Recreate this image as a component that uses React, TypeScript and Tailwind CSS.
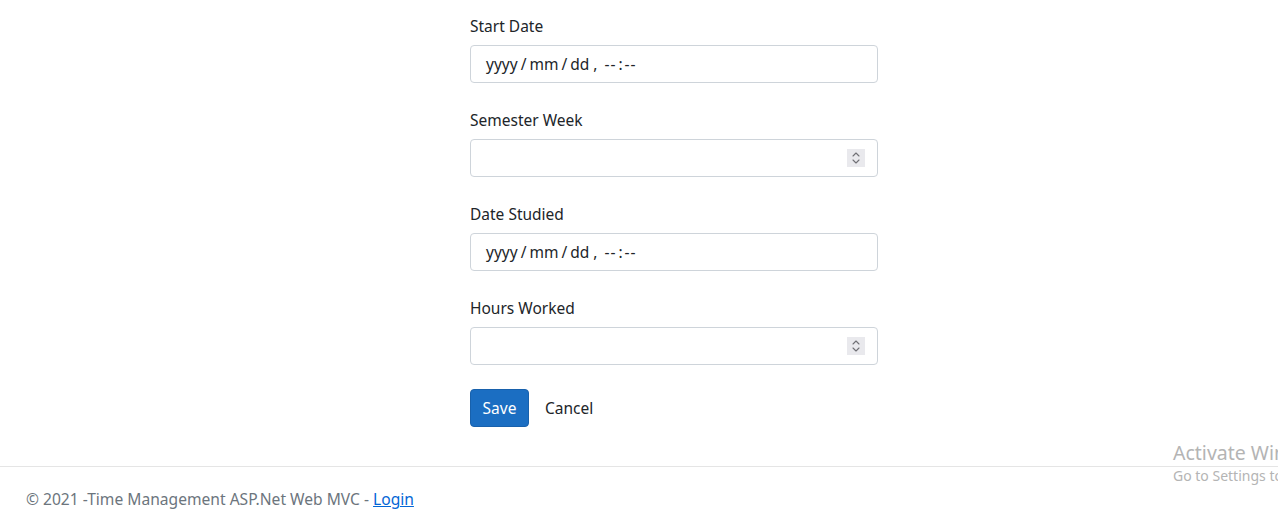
import React from "react";

const font = { fontFamily: '"Segoe UI", "Noto Sans", "Open Sans", sans-serif' };

function DateField() {
  return (
    <div className="h-[38px] w-full rounded-[4px] border border-[#ced4da] bg-white flex items-center pl-[15px] text-[15.5px] text-[#212529] pt-[1px]">
      <span>yyyy</span>
      <span className="mx-[3px]">/</span>
      <span>mm</span>
      <span className="mx-[3px]">/</span>
      <span>dd</span>
      <span className="ml-[4px]">,</span>
      <span className="ml-[7px] tracking-[1px]">--</span>
      <span className="mx-[2px]">:</span>
      <span className="tracking-[1px]">--</span>
    </div>
  );
}

function NumberField() {
  return (
    <div className="h-[38px] w-full rounded-[4px] border border-[#ced4da] bg-white flex items-center justify-end pr-[12px]">
      <div className="w-[18px] h-[18px] bg-[#e9e9ed] flex items-center justify-center">
        <svg width="10" height="16" viewBox="0 0 10 16" fill="none" stroke="#707075" strokeWidth="1.1" strokeLinecap="round" strokeLinejoin="round">
          <path d="M2 6 L5 3 L8 6" />
          <path d="M2 10 L5 13 L8 10" />
        </svg>
      </div>
    </div>
  );
}

function Group({ label, children }: { label: string; children: React.ReactNode }) {
  return (
    <div className="mb-[25px]">
      <div className="h-[24px] leading-[24px] text-[15.5px] text-[#212529] mb-[7px]">{label}</div>
      {children}
    </div>
  );
}

export default function App() {
  return (
    <div className="relative w-[1278px] h-[525px] bg-white overflow-hidden" style={font}>
      <div className="pt-[14px] pl-[470px]">
        <div className="w-[408px]">
          <Group label="Start Date"><DateField /></Group>
          <Group label="Semester Week"><NumberField /></Group>
          <Group label="Date Studied"><DateField /></Group>
          <Group label="Hours Worked"><NumberField /></Group>
        </div>
        <div className="flex items-center -mt-[1px]">
          <button className="h-[38px] w-[59px] rounded-[4px] bg-[#1b6ec2] border border-[#1861ac] text-white text-[15.5px] pt-[2px]">Save</button>
          <span className="ml-[16px] text-[15.5px] text-[#212529] pt-[2px]">Cancel</span>
        </div>
      </div>
      <div className="absolute left-0 right-0 top-[466px] border-t border-[#e5e5e5]">
        <div className="pl-[26px] pt-[20px] text-[15.6px] leading-[24px] text-[#6c757d]">
          © 2021 -Time Management ASP.Net Web MVC - <span className="text-[#0366d6] underline">Login</span>
        </div>
      </div>
      <div className="absolute left-[1173px] top-[440px] whitespace-nowrap text-[#b4b4b4]">
        <div className="text-[19.5px] leading-[26px]">Activate Windows</div>
        <div className="text-[14px] leading-[20px]">Go to Settings to activate Windows.</div>
      </div>
    </div>
  );
}
